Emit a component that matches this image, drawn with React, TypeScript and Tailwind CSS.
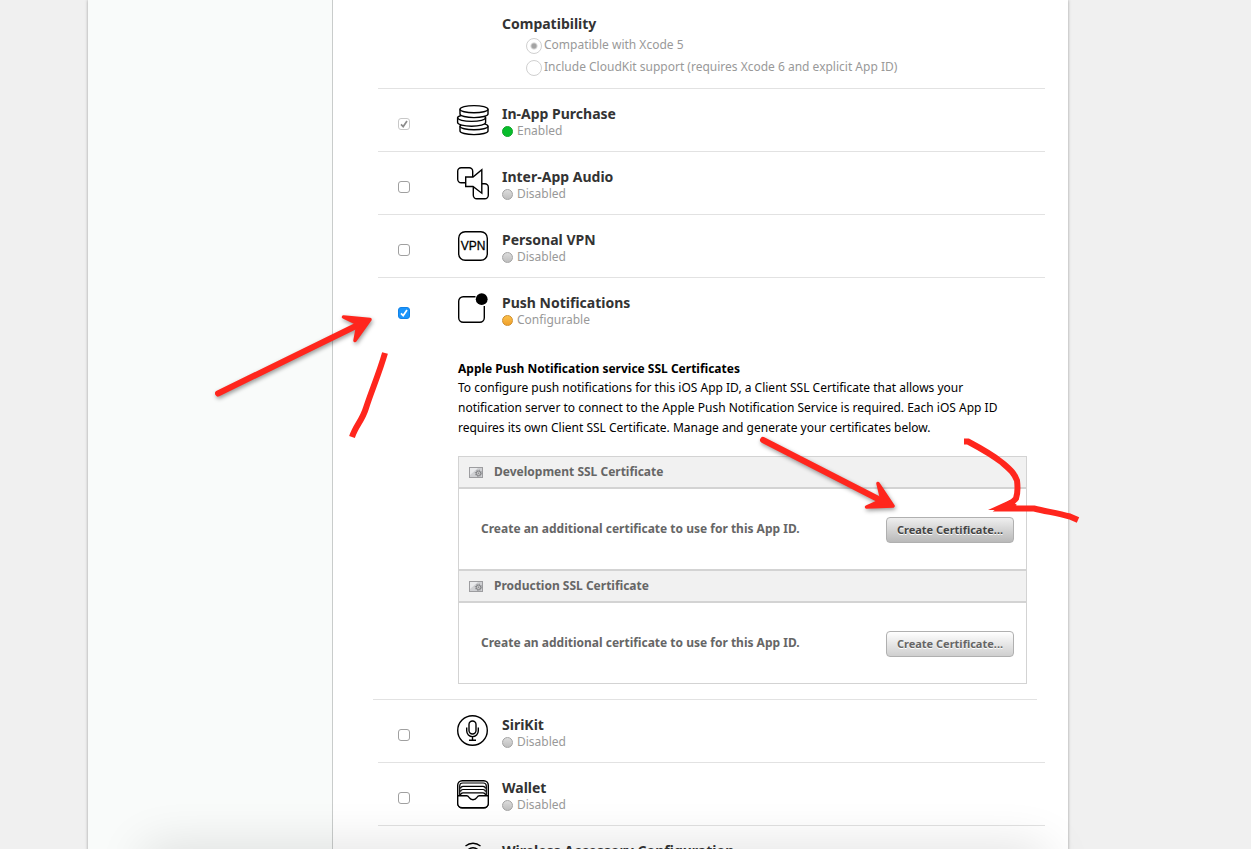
import type { ReactNode } from 'react';

type Status = 'enabled' | 'disabled' | 'configurable';

const statusDot: Record<Status, string> = {
  enabled: 'border-[#12a52b] bg-[#07bd2b]',
  disabled: 'border-[#a3a3a3] bg-linear-to-b from-[#dcdcdc] to-[#bfbfbf]',
  configurable: 'border-[#cf8e2c] bg-linear-to-b from-[#fbc04a] to-[#f0a02a]',
};

const statusLabel: Record<Status, string> = {
  enabled: 'Enabled',
  disabled: 'Disabled',
  configurable: 'Configurable',
};

function Icon({ children }: { children: ReactNode }) {
  return (
    <svg
      width="34"
      height="34"
      viewBox="0 0 34 34"
      fill="none"
      stroke="#000"
      strokeWidth="1.4"
      strokeLinejoin="round"
      aria-hidden="true"
    >
      {children}
    </svg>
  );
}

// One coin: a short cylinder seen slightly from above.
function Coin({ cx, cy }: { cx: number; cy: number }) {
  return (
    <g transform={`translate(${cx} ${cy})`} fill="#fff">
      <path d="M-14 0v4.800c0 2 6.300 3.600 14 3.600s14-1.600 14-3.600V0" />
      <ellipse rx="14" ry="3.600" />
    </g>
  );
}

function CoinsIcon() {
  return (
    <Icon>
      <Coin cx={18} cy={23.2} />
      <Coin cx={15.6} cy={14.8} />
      <Coin cx={18} cy={6.2} />
    </Icon>
  );
}

function AudioIcon() {
  return (
    <Icon>
      <rect x="1.700" y="1.700" width="15" height="15" rx="3.500" />
      <rect x="17.300" y="17.700" width="15" height="15" rx="3.500" />
      <path d="M9.700 11h7.300l8.800-7.300v23.500L17 20.500H9.700z" fill="#fff" strokeLinejoin="miter" />
    </Icon>
  );
}

function VpnIcon() {
  return (
    <Icon>
      <rect x="2.700" y="2.700" width="28.600" height="28.600" rx="6.500" />
      <text
        x="17"
        y="21"
        textAnchor="middle"
        fontSize="12"
        fontFamily="'Liberation Sans', sans-serif"
        fill="#000"
        strokeWidth="0.300"
      >
        VPN
      </text>
    </Icon>
  );
}

function PushIcon() {
  return (
    <Icon>
      <path d="M19.500 4.700H7.200a4.500 4.500 0 0 0-4.500 4.500v16.600a4.500 4.500 0 0 0 4.500 4.500h16.600a4.500 4.500 0 0 0 4.500-4.500V14" />
      <circle cx="25.700" cy="7.200" r="5.900" fill="#000" stroke="none" />
    </Icon>
  );
}

function SiriIcon() {
  return (
    <Icon>
      <circle cx="16.500" cy="16.500" r="14.800" />
      <rect x="13" y="7" width="7" height="13" rx="3.500" />
      <path d="M10.700 13.500v3.300a5.800 5.800 0 0 0 11.600 0v-3.300M16.500 22.600v3.700M13 26.300h7" />
    </Icon>
  );
}

function WalletIcon() {
  return (
    <Icon>
      <rect x="1.700" y="3.700" width="30.600" height="27" rx="4.500" />
      <path d="M3.700 18.500V9c0-2 1-3 3-3h20.600c2 0 3 1 3 3v9.500" strokeWidth="1.200" />
      <path
        d="M4.500 11.500c.2-1.500 1-2.200 2.500-2.200h20c1.500 0 2.300.7 2.500 2.200M4.500 14.700c.2-1.500 1-2.200 2.500-2.200h20c1.500 0 2.300.7 2.500 2.200M4.500 18c.2-1.500 1-2.200 2.500-2.200h20c1.500 0 2.300.7 2.500 2.200"
        strokeWidth="1.200"
      />
      <path d="M1.700 18.700h9c1.500 0 1.800.9 2.500 2 .8 1.200 1.900 2 3.800 2s3-.8 3.800-2c.7-1.100 1-2 2.500-2h9v7.500a4.500 4.500 0 0 1-4.500 4.500H6.200a4.500 4.500 0 0 1-4.500-4.500z" fill="#fff" />
    </Icon>
  );
}

function WirelessIcon() {
  return (
    <Icon>
      <path d="M9.500 6c4.500-3.600 10.500-3.600 15 0M12.200 9.500c2.900-2.200 6.700-2.200 9.600 0M14.700 13c1.400-1 3.200-1 4.600 0" />
      <circle cx="17" cy="17.500" r="1.500" fill="#000" />
    </Icon>
  );
}

function CertificateIcon() {
  return (
    <svg width="14" height="11" viewBox="0 0 14 11" aria-hidden="true">
      <rect x=".5" y=".5" width="13" height="10" fill="#cfd0d3" stroke="#9d9da0" />
      <path d="M1 1h8L1 8z" fill="#e9eaec" />
      <circle cx="9.500" cy="6.300" r="2.300" fill="#c4c4c6" stroke="#7f8083" />
      <circle cx="9.500" cy="6.300" r="3.200" fill="none" stroke="#7f8083" strokeDasharray="1.100 1.413" />
      <circle cx="9.500" cy="6.300" r=".7" fill="#8a8b8e" />
    </svg>
  );
}

interface CapabilityProps {
  id: string;
  name: string;
  status: Status;
  icon: ReactNode;
  checked?: boolean;
  locked?: boolean;
}

function Capability({ id, name, status, icon, checked, locked }: CapabilityProps) {
  return (
    <div className="flex h-[63px] items-start">
      <span className="mt-[29px] ml-5 grid size-3">
        <input
          id={id}
          type="checkbox"
          defaultChecked={checked}
          disabled={locked}
          className="peer col-start-1 row-start-1 size-3 appearance-none rounded-[3px] border border-[#a0a0a0] bg-white checked:border-[#1283e8] checked:bg-[#1a94fb] disabled:border-[#c8c8c8] disabled:bg-white"
        />
        <svg
          viewBox="0 0 12 12"
          className="pointer-events-none invisible col-start-1 row-start-1 size-3 text-white peer-checked:visible peer-disabled:text-[#8c8c8c]"
          fill="none"
          stroke="currentColor"
          strokeWidth="1.700"
        >
          <path d="M3 6.300l2.200 2.300L9 3" />
        </svg>
      </span>
      <span className="mt-[14px] ml-[46px]">{icon}</span>
      <div className="mt-4 ml-3">
        <label htmlFor={id} className="block text-[14px] leading-[18px] font-bold text-[#333]">
          {name}
        </label>
        <p className="flex items-center gap-1 text-[12px] leading-4 text-[#999]">
          <span className={`size-[11px] rounded-full border ${statusDot[status]}`} />
          {statusLabel[status]}
        </p>
      </div>
    </div>
  );
}

function CertificateSection({ title, active }: { title: string; active?: boolean }) {
  return (
    <section className="border-t-2 border-[#d3d3d3] first:border-t-0">
      <h3 className="flex h-8 items-center gap-[11px] border-b-2 border-[#d3d3d3] bg-[#f1f1f1] pl-[10px] text-[12px] font-bold text-[#666]">
        <CertificateIcon />
        {title}
      </h3>
      <div className="flex h-20 items-center justify-between pr-3 pl-[22px]">
        <p className="text-[12px] font-bold text-[#666]">
          Create an additional certificate to use for this App ID.
        </p>
        <button
          type="button"
          className={`mt-[2px] h-[26px] w-32 rounded-[4px] border border-[#b0b0b0] bg-linear-to-b text-[11px] font-bold text-shadow-[0_1px_0_#fff] ${
            active ? 'from-[#efefef] to-[#b9b9b9] text-[#444]' : 'from-white to-[#cfcfcf] text-[#666]'
          }`}
        >
          Create Certificate...
        </button>
      </div>
    </section>
  );
}

function CompatibilityOption({ label, checked }: { label: string; checked?: boolean }) {
  return (
    <label className="flex h-[22px] items-center gap-[2px] text-[12px] text-[#999]">
      <input
        type="radio"
        name="compatibility"
        defaultChecked={checked}
        disabled
        className="mt-[2px] size-4 appearance-none rounded-full border border-[#d0d0d0] bg-white checked:bg-[radial-gradient(circle,#a3a3a3_2px,#fff_4px)]"
      />
      {label}
    </label>
  );
}

// Hand-drawn marks lying over the page.
function Annotations() {
  return (
    <svg
      width="1251"
      height="849"
      viewBox="0 0 1251 849"
      className="pointer-events-none absolute top-0 left-0"
      fill="none"
      stroke="#ff261d"
      aria-hidden="true"
    >
      <g className="drop-shadow-[1px_2px_2px_rgba(0,0,0,0.4)]" strokeLinecap="round" strokeLinejoin="round">
        <path d="M218 393.500L360 324" strokeWidth="6" />
        <path d="M343.500 317L370 319.500 355 340.500 358 324z" strokeWidth="3.500" fill="#ff261d" />
        <path d="M763 440L884 502" strokeWidth="6" />
        <path d="M878 483.500L893 506 866.500 507 882 500z" strokeWidth="3.500" fill="#ff261d" />
      </g>
      <path d="M385 353C379 374 371 392 366 408C362 421 356 425 352 437" strokeWidth="6" />
      <path
        d="M964 441.500h4c15 8 24 13 34 21 8 7 12 10 15 18 1 8 1 12-1 18-4 5-7 5-14 10h32c13 3 24 5 36 8l8 3.500"
        strokeWidth="6"
      />
      <path d="M988 510l22-10 7 5-7 5z" fill="#ff261d" stroke="none" />
    </svg>
  );
}

export default function App() {
  return (
    <div className="relative h-screen overflow-hidden bg-[#f0f0f0] pl-[88px] font-['Noto_Sans','Open_Sans',sans-serif]">
      <div className="flex min-h-full max-w-[980px] bg-white shadow-[0_0_3px_rgba(0,0,0,0.35)]">
        <aside className="w-[245px] shrink-0 border-r border-[#c9cccb] bg-[#f9fbfa]" />
        <main className="min-w-0 flex-1 pr-[23px] pl-[45px]">
          <fieldset className="h-[88px] pt-[14px] pl-[124px]">
            <legend className="float-left w-full text-[14px] leading-5 font-bold text-[#333]">
              Compatibility
            </legend>
            <div className="clear-both pl-6">
              <CompatibilityOption label="Compatible with Xcode 5" checked />
              <CompatibilityOption label="Include CloudKit support (requires Xcode 6 and explicit App ID)" />
            </div>
          </fieldset>

          <div className="divide-y divide-[#e2e2e2] border-t border-[#e2e2e2]">
            <Capability id="iap" name="In-App Purchase" status="enabled" icon={<CoinsIcon />} checked locked />
            <Capability id="audio" name="Inter-App Audio" status="disabled" icon={<AudioIcon />} />
            <Capability id="vpn" name="Personal VPN" status="disabled" icon={<VpnIcon />} />
            <Capability id="push" name="Push Notifications" status="configurable" icon={<PushIcon />} checked />
          </div>

          <div className="pt-[18px] pr-[18px] pb-[15px] pl-20">
            <h2 className="text-[12px] leading-[19px] font-bold text-black">
              Apple Push Notification service SSL Certificates
            </h2>
            <p className="text-[12px] leading-5 text-black">
              To configure push notifications for this iOS App ID, a Client SSL Certificate that allows your
              <br />
              notification server to connect to the Apple Push Notification Service is required. Each iOS App ID
              <br />
              requires its own Client SSL Certificate. Manage and generate your certificates below.
            </p>
            <div className="mt-[18px] border border-[#d3d3d3]">
              <CertificateSection title="Development SSL Certificate" active />
              <CertificateSection title="Production SSL Certificate" />
            </div>
          </div>
          <hr className="mr-2 -ml-[5px] border-[#e2e2e2]" />

          <div className="divide-y divide-[#e2e2e2]">
            <Capability id="siri" name="SiriKit" status="disabled" icon={<SiriIcon />} />
            <Capability id="wallet" name="Wallet" status="disabled" icon={<WalletIcon />} />
            <Capability
              id="wireless"
              name="Wireless Accessory Configuration"
              status="disabled"
              icon={<WirelessIcon />}
            />
          </div>
        </main>
      </div>
      <div className="pointer-events-none absolute right-[205px] -bottom-10 left-[145px] h-10 shadow-[0_0_50px_rgba(0,0,0,0.14)]" />
      <Annotations />
    </div>
  );
}
